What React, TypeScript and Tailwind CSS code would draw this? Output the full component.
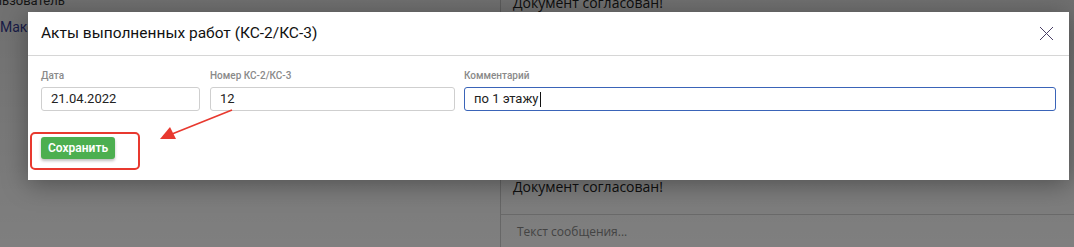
export default function App() {
  return (
    <div className="relative h-[247px] w-full overflow-hidden bg-white font-['Roboto',sans-serif]">
      {/* page behind the dialog */}
      <div className="flex h-full">
        <div className="w-[501px] border-r border-[#d0d0d0]">
          <div className="-mt-[9px] -ml-[22px] text-[13px] text-[#333]">Пользователь</div>
          <div className="mt-[6px] text-[14px] text-[#3a3f9e]">Максим</div>
        </div>
        <div className="flex flex-1 flex-col font-['Open_Sans',sans-serif]">
          <div className="-mt-[8px] pl-[12px] text-[14px] text-[#222]">Документ согласован!</div>
          <div className="mt-auto pl-[12px] text-[14px] text-[#222]">Документ согласован!</div>
          <div className="mt-[17px] h-[33px] border-t border-[#d6d6d6] pl-[16px] pt-[8px] text-[12px] text-[#888]">
            Текст сообщения...
          </div>
        </div>
      </div>

      {/* overlay */}
      <div className="absolute inset-0 bg-[linear-gradient(to_bottom,rgba(0,0,0,0.56),rgba(0,0,0,0.5))]" />

      {/* dialog */}
      <div className="absolute left-[28px] top-[12px] w-[1041px] bg-white shadow-[0_4px_24px_rgba(0,0,0,0.35)]">
        <div className="flex h-[44px] items-center justify-between border-b border-[#d6d6d6] pl-[13px] pr-[15px]">
          <div className="text-[15.5px] text-[#111]">Акты выполненных работ (КС-2/КС-3)</div>
          <svg width="15" height="15" viewBox="0 0 15 15" className="text-[#4a3f66]">
            <path d="M1 1L14 14M14 1L1 14" stroke="currentColor" strokeWidth="1" fill="none" />
          </svg>
        </div>
        <div className="px-[13px] pt-[14px] pb-[21px]">
          <div className="flex gap-[10px]">
            <div className="w-[159px]">
              <div className="mb-[6px] text-[10px] font-medium leading-[11px] text-[#8a8a8a]">Дата</div>
              <div className="flex h-[24px] items-center rounded-[3px] border border-[#cfcfcf] px-[9px] text-[13px] text-[#222]">
                21.04.2022
              </div>
            </div>
            <div className="w-[245px]">
              <div className="mb-[6px] text-[10px] font-medium leading-[11px] text-[#8a8a8a]">Номер КС-2/КС-3</div>
              <div className="flex h-[24px] items-center rounded-[3px] border border-[#cfcfcf] px-[9px] text-[13px] text-[#222]">
                12
              </div>
            </div>
            <div className="ml-[-1px] flex-1">
              <div className="mb-[6px] text-[10px] font-medium leading-[11px] text-[#8a8a8a]">Комментарий</div>
              <div className="flex h-[24px] items-center rounded-[3px] border border-[#3a64b8] px-[9px] text-[13px] text-[#222]">
                по 1 этажу
                <span className="ml-[1px] inline-block h-[15px] w-[1px] bg-[#111]" />
              </div>
            </div>
          </div>
          <button className="mt-[26px] h-[22px] rounded-[3px] bg-[#4caf50] px-[7px] text-[12px] font-semibold text-white shadow-[0_2px_3px_rgba(0,0,0,0.25)]">
            Сохранить
          </button>
        </div>
      </div>

      {/* annotation */}
      <div className="absolute left-[30px] top-[132px] h-[38px] w-[110px] rounded-[5px] border-[2.5px] border-[#e8392f]" />
      <svg className="pointer-events-none absolute left-0 top-0" width="1074" height="247">
        <line x1="232" y1="110" x2="172" y2="134" stroke="#e8392f" strokeWidth="1.8" />
        <polygon points="160,139 170,127 176,139" fill="#e8392f" />
      </svg>
    </div>
  );
}
